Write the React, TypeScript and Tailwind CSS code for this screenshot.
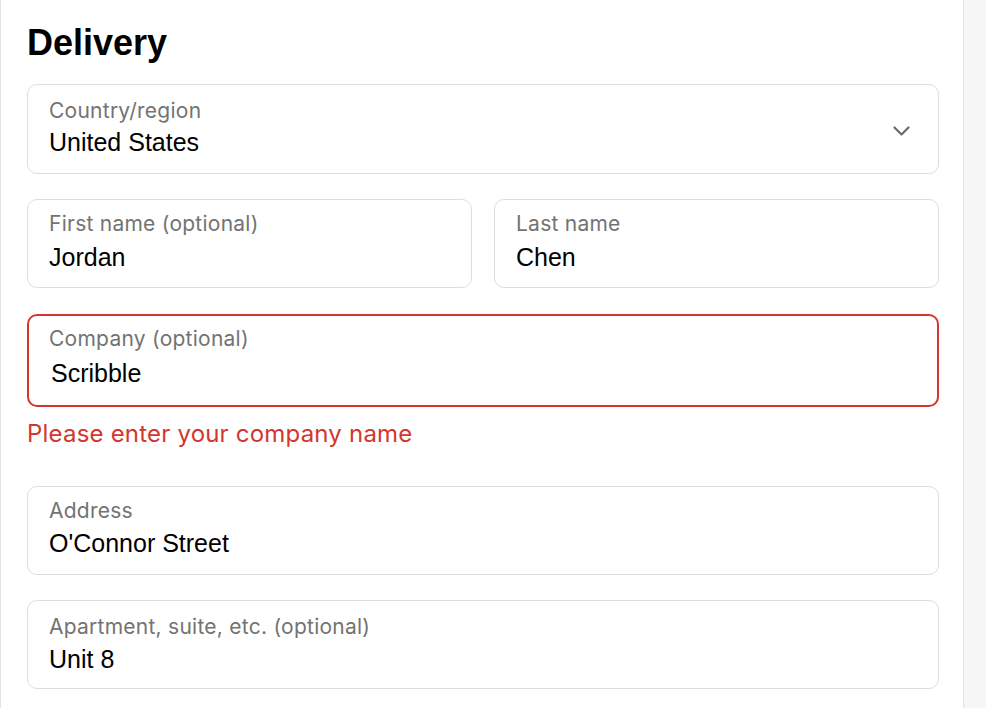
import type { ReactNode } from "react";

const labelFont = { fontFamily: "Inter, 'Noto Sans', sans-serif" };
const valueFont = { fontFamily: "'Liberation Sans', Arial, sans-serif" };

function Field({
  label,
  value,
  error,
  right,
  className = "",
  pt = "pt-[11px]",
  gap = "mt-[6px]",
}: {
  label: string;
  value: string;
  error?: boolean;
  right?: ReactNode;
  className?: string;
  pt?: string;
  gap?: string;
}) {
  return (
    <div
      className={`flex items-start rounded-[10px] bg-white ${
        error ? "h-[93px] border-2 border-[#d3362f] pl-[20px]" : "h-[89px] border border-[#dedede] pl-[21px]"
      } ${pt} ${className}`}
    >
      <div className="flex flex-1 flex-col">
        <span style={labelFont} className="text-[21px] leading-[25px] tracking-[0.25px] text-[#737373]">
          {label}
        </span>
        <span
          style={valueFont}
          className={`text-[25px] leading-[29px] text-black ${gap} ${error ? "ml-[2px]" : ""}`}
        >
          {value}
        </span>
      </div>
      {right}
    </div>
  );
}

function Chevron() {
  return (
    <svg width="17" height="11" viewBox="0 0 17 11" className="mr-[28px] mt-[28px]" fill="none">
      <path d="M1.5 1.5 L8.5 8.5 L15.5 1.5" stroke="#6b6b6b" strokeWidth="2.2" strokeLinecap="round" strokeLinejoin="round" />
    </svg>
  );
}

export default function App() {
  return (
    <div className="flex h-[708px] w-[986px] overflow-hidden bg-[#f6f6f6]">
      <main className="flex h-full w-[964px] flex-col border-x border-[#e4e4e4] bg-white pl-[26px] pr-[24px] pt-[22px]">
        <h1 style={valueFont} className="text-[36px] font-bold leading-[41px] text-black">
          Delivery
        </h1>

        <Field
          className="mt-[21px] !h-[90px]"
          pt="pt-[13px]"
          gap="mt-[5px]"
          label="Country/region"
          value="United States"
          right={<Chevron />}
        />

        <div className="mt-[25px] grid grid-cols-2 gap-[22px]">
          <Field label="First name (optional)" value="Jordan" gap="mt-[7px]" />
          <Field label="Last name" value="Chen" gap="mt-[7px]" />
        </div>

        <Field
          className="mt-[26px]"
          pt="pt-[10px]"
          gap="mt-[8px]"
          label="Company (optional)"
          value="Scribble"
          error
        />
        <p style={labelFont} className="mt-[12px] text-[24px] leading-[29px] tracking-[0.2px] text-[#d3362f]">
          Please enter your company name
        </p>

        <Field className="mt-[38px]" label="Address" value="O'Connor Street" />
        <Field
          className="mt-[25px]"
          pt="pt-[13px]"
          label="Apartment, suite, etc. (optional)"
          value="Unit 8"
        />
      </main>
    </div>
  );
}
